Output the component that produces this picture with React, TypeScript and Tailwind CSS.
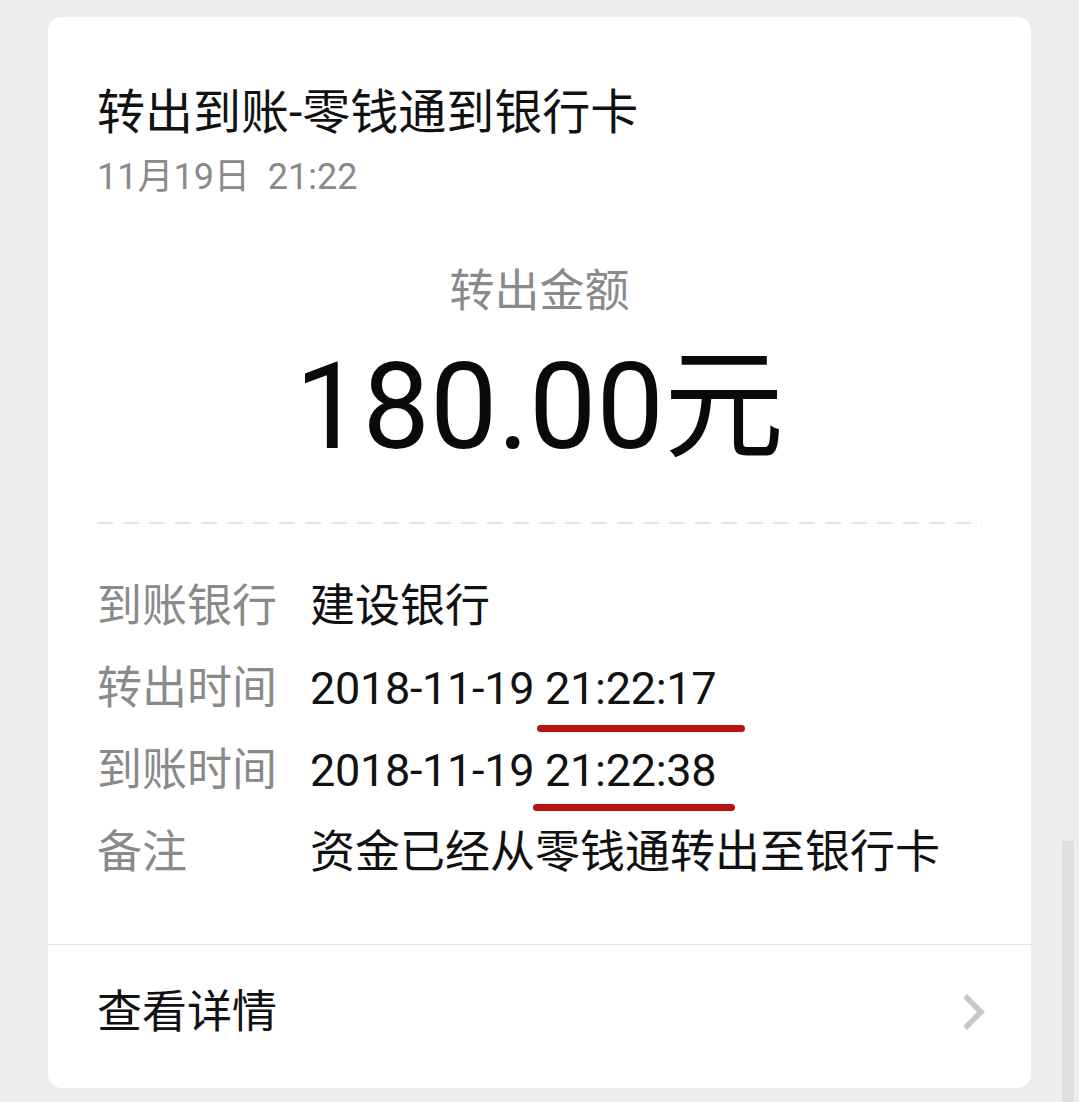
const FONT = "font-['Roboto','Noto_Sans_CJK_SC',sans-serif]";

type Row = {
  label: string;
  value: string;
  time?: string;
  line?: { top: string; left: string; right: string };
};

const rows: Row[] = [
  { label: "到账银行", value: "建设银行" },
  { label: "转出时间", value: "2018-11-19", time: "21:22:17", line: { top: "top-[62px]", left: "-left-[8px]", right: "-right-[29px]" } },
  { label: "到账时间", value: "2018-11-19", time: "21:22:38", line: { top: "top-[59px]", left: "-left-[12px]", right: "-right-[19px]" } },
  { label: "备注", value: "资金已经从零钱通转出至银行卡" },
];

function Chevron() {
  return (
    <svg width="28" height="40" viewBox="0 0 28 40" className="-mr-[6px]">
      <polyline points="5,3 21,19 5,35" fill="none" stroke="#c8c8c8" strokeWidth="5.5" />
    </svg>
  );
}

export default function App() {
  return (
    <div className={`relative min-h-[1102px] bg-[#ededed] pt-[17px] pb-[14px] ${FONT}`}>
      <div className="mx-[48px] rounded-[14px] bg-white overflow-hidden">
        <div className="px-[49px] pt-[68px] pb-[50px]">
          <div className="text-[48px] leading-[56px] text-[#111]">转出到账-零钱通到银行卡</div>
          <div className="mt-[14px] text-[36px] leading-[44px] text-[#8a8a8a] whitespace-pre">11月19日  21:22</div>

          <div className="mt-[67px] text-center text-[45px] leading-[52px] text-[#8a8a8a]">转出金额</div>
          <div className="mt-[29px] text-center text-[120px] leading-[120px] text-[#0a0a0a]">180.00元</div>

          <div className="mt-[55px] h-[2px] bg-[repeating-linear-gradient(to_right,#e3e3e3_0_16px,transparent_16px_26px)]" />

          <div className="mt-[42px]">
            {rows.map((r) => (
              <div key={r.label} className="flex h-[82px] items-center text-[45px] leading-[52px]">
                <span className="w-[213px] shrink-0 text-[#8a8a8a]">{r.label}</span>
                <span className={`text-[#111] whitespace-pre ${r.time ? "tracking-[-0.3px]" : ""}`}>
                  {r.value}
                  {r.time ? " " : ""}
                </span>
                {r.time && r.line ? (
                  <span className="relative inline-block text-[#111] tracking-[-0.3px]">
                    {r.time}
                    <span className={`absolute ${r.line.top} ${r.line.left} ${r.line.right} h-[7px] rounded-full bg-[#b8120f]`} />
                  </span>
                ) : null}
              </div>
            ))}
          </div>
        </div>

        <div className="h-px bg-[#e2e2e2]" />

        <div className="flex h-[143px] items-center px-[49px] pb-[8px]">
          <span className="text-[45px] leading-[52px] text-[#111]">查看详情</span>
          <span className="ml-auto flex">
            <Chevron />
          </span>
        </div>
      </div>

      <div className="absolute right-[5px] top-[841px] bottom-0 w-[12px] bg-[#dfdfdf]" />
    </div>
  );
}
